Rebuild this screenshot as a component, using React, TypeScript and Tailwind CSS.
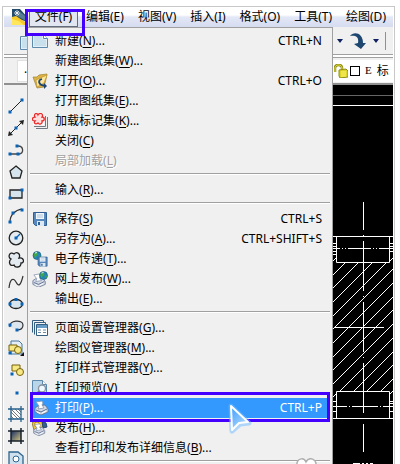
import { ReactNode } from "react";

type Entry = {
	label: string;
	accel: string;
	dots?: boolean;
	shortcut?: string;
	icon?: ReactNode;
	disabled?: boolean;
	active?: boolean;
};

const Svg = ({ children }: { children: ReactNode }) => (
	<svg viewBox="0 0 16 16" className="size-4 shrink-0" aria-hidden="true">
		{children}
	</svg>
);

const Dot = ({ x, y }: { x: number; y: number }) => (
	<rect x={x - 1.5} y={y - 1.5} width="3" height="3" fill="#0862b5" />
);

const Floppy = () => (
	<>
		<path d="M1.5 1.5h13v13h-11l-2-2z" fill="#5688bd" stroke="#315f94" />
		<path d="M4 2h8v6H4z" fill="#f2f7fb" />
		<path d="M5 4h6M5 6h6" stroke="#a9c3da" />
		<path d="M5 10h7v5H5z" fill="#dce8f2" />
		<path d="M6 11h2v3H6z" fill="#315f94" />
	</>
);

const Globe = ({ x, y }: { x: number; y: number }) => (
	<g transform={`translate(${x} ${y})`}>
		<circle r="4" fill="#2388b5" stroke="#17536d" strokeWidth=".6" />
		<path d="M-3-2 0-3.500 1-1-1 1-2 3-3 0zM2 0l2 1-2 2z" fill="#45a647" />
		<path d="M-2-2.500 0-3" stroke="#d5f4f8" />
	</g>
);

const Printer = () => (
	<>
		<path d="m2 8 3-2 7-1 3 4v3l-7 3-6-3z" fill="#d3d9e6" stroke="#60708e" strokeWidth=".8" strokeLinejoin="round" />
		<path d="m3 2 6-1 1 2-1 2 2 3-6 1 1-3z" fill="#fff" stroke="#8492ad" strokeWidth=".8" strokeLinejoin="round" />
		<path d="m3 10 5 2 6-3" stroke="#60708e" fill="none" />
		<path d="m4 12 3 1.500M9 13l4-2" stroke="#fff" />
	</>
);

const icons = {
	create: (
		<Svg>
			<path d="M.500 1.500h11l4 4v9H.500z" fill="#e3f0f7" stroke="#5d8aac" />
			<path d="M2 3h8v3l4 1v6H2z" fill="#c8e0ec" />
			<path d="M11.500 1.500v4h4" fill="#fff" stroke="#5d8aac" />
		</Svg>
	),
	open: (
		<Svg>
			<path d="m1 4 4 0 2-2 8-1-1 5-2 8-7 1z" fill="#dcb347" stroke="#a98a3c" strokeWidth=".8" />
			<path d="m4 7 11-5-3 8-7 4z" fill="#ffe9a0" stroke="#b78b20" strokeWidth=".6" />
			<path d="M10 6C6 7 6 11 11 12.500h2" fill="none" stroke="#1c4775" strokeWidth="1.800" />
			<path d="m12 10 3 3-3 3z" fill="#1c4775" />
		</Svg>
	),
	markup: (
		<Svg>
			<path d="M15.500 4v11.500H4M13.500 3v10.500H2" fill="none" stroke="#737982" />
			<path d="M1 1h11v11H1z" fill="#fff" />
			<path
				d="M3 4C1 1 5-1 6 2c2-3 6-1 4 2 3 0 3 4 0 4 1 3-3 4-4 2-2 2-5 0-3-2-4 0-3-4 0-4Z"
				fill="#ffdede"
				stroke="#ed2a2a"
				strokeWidth="1.300"
			/>
		</Svg>
	),
	save: (
		<Svg>
			<Floppy />
		</Svg>
	),
	transmit: (
		<Svg>
			<Globe x={5} y={4.5} />
			<g transform="translate(5 5) scale(.7)">
				<Floppy />
			</g>
		</Svg>
	),
	web: (
		<Svg>
			<g transform="translate(-1 2) scale(.95)">
				<Printer />
			</g>
			<Globe x={11.5} y={4.5} />
		</Svg>
	),
	pageSetup: (
		<Svg>
			<path d="M.500 12.500v-12h11v2M2.500 14.500v-12h11v2" fill="none" stroke="#345f83" />
			<path d="M4.500 4.500h11v11h-11z" fill="#fff" stroke="#345f83" />
			<path d="M5 5h10v3H5z" fill="#669cc5" />
			<path d="M6 10h3M6 12.500h3M11 10h3M11 12.500h3" stroke="#6b8aa4" />
		</Svg>
	),
	preview: (
		<Svg>
			<path d="M.500.500h10l4 4v11H.500z" fill="#b9d6e8" stroke="#5d8aac" />
			<path d="M10.500.500v4h4" fill="#fff" stroke="#5d8aac" />
			<circle cx="10" cy="8.500" r="3.500" fill="#eef8ff" stroke="#8a929e" strokeWidth="1.300" />
			<path d="m7.500 11-4 4" stroke="#727d8c" strokeWidth="2" />
		</Svg>
	),
	print: (
		<Svg>
			<Printer />
		</Svg>
	),
	publish: (
		<Svg>
			<path d="m0 3 4-3 6 1 2 4-4 5-6 0z" fill="#f0c63c" stroke="#806b27" strokeWidth=".8" />
			<circle cx="5" cy="4.500" r="2.500" fill="#fff2a2" stroke="#b18b1c" />
			<path d="m10 1 4 2 1 4-4 1z" fill="#375d91" stroke="#23466e" />
			<g transform="translate(0 3) scale(.85)">
				<Printer />
			</g>
		</Svg>
	),
};

const sections: Entry[][] = [
	[
		{ label: "新建", accel: "N", dots: true, shortcut: "CTRL+N", icon: icons.create },
		{ label: "新建图纸集", accel: "W", dots: true },
		{ label: "打开", accel: "O", dots: true, shortcut: "CTRL+O", icon: icons.open },
		{ label: "打开图纸集", accel: "E", dots: true },
		{ label: "加载标记集", accel: "K", dots: true, icon: icons.markup },
		{ label: "关闭", accel: "C" },
		{ label: "局部加载", accel: "L", disabled: true },
	],
	[{ label: "输入", accel: "R", dots: true }],
	[
		{ label: "保存", accel: "S", shortcut: "CTRL+S", icon: icons.save },
		{ label: "另存为", accel: "A", dots: true, shortcut: "CTRL+SHIFT+S" },
		{ label: "电子传递", accel: "T", dots: true, icon: icons.transmit },
		{ label: "网上发布", accel: "W", dots: true, icon: icons.web },
		{ label: "输出", accel: "E", dots: true },
	],
	[
		{ label: "页面设置管理器", accel: "G", dots: true, icon: icons.pageSetup },
		{ label: "绘图仪管理器", accel: "M", dots: true },
		{ label: "打印样式管理器", accel: "Y", dots: true },
		{ label: "打印预览", accel: "V", icon: icons.preview },
		{ label: "打印", accel: "P", dots: true, shortcut: "CTRL+P", icon: icons.print, active: true },
		{ label: "发布", accel: "H", dots: true, icon: icons.publish },
		{ label: "查看打印和发布详细信息", accel: "B", dots: true },
	],
];

const menus = ["编辑(E)", "视图(V)", "插入(I)", "格式(O)", "工具(T)", "绘图(D)"];

const drawTools: { name: string; art: ReactNode }[] = [
	{ name: "line", art: <><path d="M2 14 14 2" stroke="#222" /><Dot x={2} y={14} /><Dot x={14} y={2} /></> },
	{
		name: "xline",
		art: <><path d="M2 14 14 2" stroke="#222" /><path d="m0 16 1-5 4 4zM16 0l-5 1 4 4z" fill="#222" /><Dot x={8} y={8} /></>,
	},
	{
		name: "polyline",
		art: <><path d="M1 12h10c5 0 5-8-1-8" fill="none" stroke="#444" strokeWidth="1.3" /><Dot x={2} y={12} /><Dot x={10} y={12} /><Dot x={9} y={4} /></>,
	},
	{ name: "polygon", art: <path d="m8 2 6 5-2 7H4L2 7z" fill="#d6e4ed" stroke="#222" strokeWidth="1.3" /> },
	{
		name: "rectangle",
		art: <><path d="M2 4h12v8H2z" fill="#d6e4ed" stroke="#222" strokeWidth="1.3" /><Dot x={2} y={12} /><Dot x={14} y={4} /></>,
	},
	{
		name: "arc",
		art: <><path d="M2 14C2 7 7 2 14 1" fill="none" stroke="#333" strokeWidth="1.2" /><Dot x={2} y={14} /><Dot x={5} y={5} /><Dot x={14} y={2} /></>,
	},
	{
		name: "circle",
		art: <><circle cx="8" cy="8" r="6.800" fill="#e3ebf1" stroke="#222" strokeWidth="1.3" /><path d="m8 8 4-4" stroke="#0862b5" strokeWidth="1.3" /><Dot x={8} y={8} /></>,
	},
	{
		name: "revision cloud",
		art: (
			<path
				d="M3 7C-1 5 2-1 6 2c3-3 7 0 5 4 5-1 6 5 2 5 0 5-6 5-7 2-4 2-6-3-3-6Z"
				fill="#e3ebf1"
				stroke="#222"
				strokeWidth="1.3"
			/>
		),
	},
	{ name: "spline", art: <path d="M1 14C2 5 5 3 8 8c3 6 5 2 7-6" fill="none" stroke="#333" strokeWidth="1.2" /> },
	{
		name: "ellipse",
		art: <><ellipse cx="8" cy="8" rx="6.500" ry="4.500" fill="#d6e4ed" stroke="#222" strokeWidth="1.3" /><Dot x={2} y={8} /><Dot x={14} y={8} /><Dot x={8} y={3.5} /></>,
	},
	{
		name: "ellipse arc",
		art: <><path d="M2 9c-2-7 13-8 13-2 0 4-3 5-6 5" fill="#dce6ee" stroke="#333" strokeWidth="1.2" /><Dot x={2} y={7} /><Dot x={9} y={12} /></>,
	},
	{
		name: "insert block",
		art: (
			<>
				<path d="M3 1h8l3 3v10H3z" fill="#e4eef6" stroke="#46779d" />
				<path d="M1 5h8v6H1z" fill="#f8e884" stroke="#75610a" />
				<circle cx="10" cy="10" r="3.500" fill="#f8e884" stroke="#75610a" />
				<path d="M16 12v4h-4z" fill="#111" />
				<Dot x={2} y={13} />
			</>
		),
	},
	{
		name: "make block",
		art: (
			<>
				<path d="M4 3h8v6H4z" fill="#f8e884" stroke="#75610a" />
				<circle cx="12" cy="10" r="3.500" fill="#f8e884" stroke="#75610a" />
				<Dot x={4} y={12} />
			</>
		),
	},
	{ name: "point", art: <Dot x={9} y={9} /> },
	{
		name: "hatch",
		art: (
			<>
				<path d="M3 3h10v10H3z" fill="#fff" />
				<path d="m3 10 3 3M3 6l7 7M3 3l10 10M7 3l6 6M10 3l3 3" stroke="#555" strokeWidth=".8" />
				<path d="M0 3h16M0 13h16M3 0v16M13 0v16" stroke="#28608b" strokeWidth="1.3" />
			</>
		),
	},
	{
		name: "gradient",
		art: (
			<>
				<defs>
					<linearGradient id="fill" x2="1" y2="1">
						<stop stopColor="#142c63" />
						<stop offset="1" stopColor="#d7c87d" />
					</linearGradient>
				</defs>
				<path d="M3 3h10v10H3z" fill="url(#fill)" />
				<path d="M0 3h16M0 13h16M3 0v16M13 0v16" stroke="#18212a" strokeWidth="1.5" />
			</>
		),
	},
	{
		name: "region",
		art: (
			<>
				<path d="M1 2h9l5 4v10H1z" fill="#cfe1ef" stroke="#2e648d" strokeWidth="1.300" />
				<circle cx="8" cy="9" r="3" fill="#fff" stroke="#2e648d" />
			</>
		),
	},
];

const MenuItem = ({ entry }: { entry: Entry }) => {
	const button = (
		<button
			disabled={entry.disabled}
			className={
				entry.active
					? "flex h-5 w-full items-center gap-[6px] bg-[#3399ff] pr-[5px] text-white"
					: entry.disabled
						? "flex h-5 w-full items-center gap-[7px] pr-2 pl-[2px] text-[#a0a0a0] [text-shadow:1px_1px_0_#fff]"
						: "flex h-5 w-full items-center gap-[7px] pr-2 pl-[2px]"
			}
		>
			<span className="size-4 shrink-0">{entry.icon}</span>
			<span className="whitespace-nowrap">
				{entry.label}(<u className="underline-offset-2">{entry.accel}</u>){entry.dots && "..."}
			</span>
			{entry.shortcut && <span className="ml-auto">{entry.shortcut}</span>}
		</button>
	);

	if (!entry.active) {
		return button;
	}

	return (
		<div className="relative z-10 -mt-[6px] -mb-1 border-[3px] border-[#4400ff] bg-[#f0f0f0] pt-[3px] pb-px">
			{button}
		</div>
	);
};

const FileMenu = () => (
	<div className="absolute top-full left-[23px] z-10 w-[306px] border border-[#a0a0a0] bg-[#f0f0f0] px-[2px] pt-[3px] pb-2">
		{sections.map((section, i) => (
			<div key={i}>
				{i > 0 && (
					<div className="h-[9px] pt-[2px]">
						<hr className="h-[2px] border-t border-b border-t-[#a0a0a0] border-b-white" />
					</div>
				)}
				{section.map((entry) => (
					<MenuItem key={entry.label} entry={entry} />
				))}
			</div>
		))}
		<div className="pt-[2px]">
			<hr className="h-[2px] border-t border-b border-t-[#a0a0a0] border-b-white" />
		</div>
		<svg viewBox="0 0 28 34" className="absolute top-[374px] left-[198px] z-20 h-[34px] w-7" aria-hidden="true">
			<defs>
				<linearGradient id="pointer" x2=".7" y2="1">
					<stop stopColor="#3a9cff" />
					<stop offset="1" stopColor="#b4dcff" />
				</linearGradient>
			</defs>
			<path d="m5 4 18 17-9 1-8 7z" fill="none" stroke="#6db9ff" strokeWidth="5" strokeLinejoin="round" opacity=".5" />
			<path d="m5 4 17 16-9 1-7 7z" fill="url(#pointer)" stroke="#fff" strokeWidth="2" strokeLinejoin="round" />
		</svg>
		<svg viewBox="0 0 22 8" className="absolute right-[14px] bottom-1 h-2 w-[22px]" aria-hidden="true">
			<path d="M1 8C0 0 8-1 10 4c3-6 11-3 10 4" fill="#fff" stroke="#b0b0b0" strokeWidth="1.500" />
		</svg>
	</div>
);

const Drawing = () => (
	<svg viewBox="333 85 60 379" className="h-[379px] w-[60px] shrink-0" fill="none" stroke="#fff" aria-label="drawing">
		<path d="M333 95.500h60" stroke="#666" />
		<path d="M333 105.500h60" />
		<clipPath id="hatchArea">
			<path d="M333 263h60v128h-60z" />
		</clipPath>
		<g clipPath="url(#hatchArea)">
			{Array.from({ length: 14 }, (_, i) => (
				<path key={i} d={`M333 ${Math.round(274.5 + i * 13.7)}l60-60`} shapeRendering="crispEdges" />
			))}
		</g>
		<path d="M363.500 202v28M363.500 235v1M363.500 241v50M363.500 296v1M363.500 302v50M363.500 357v1M363.500 363v50M363.500 424v28" />
		<path d="M334 327.500h50" />
		<path d="M333 236.500h60M336.500 236v26.500h53V236M333 418.500h60M336.500 418v-26.500h53V418" />
		<path d="M333 248.500h7M342 248.500h1M345 248.500h1M348 248.500h23M373 248.500h1M376 248.500h1M379 248.500h14" />
		<path d="M333 406.500h14M349 406.500h1M352 406.500h26M380 406.500h1M383 406.500h10" />
		<path d="M333 243.500h3M333 246.500h3M333 251.500h3M333 254.500h3M390 243.500h3M390 246.500h3M390 251.500h3" />
		<path d="M333 401.500h3M333 411.500h3M390 401.500h3M390 403.500h3M390 411.500h3M333 261l3-3M390 261l3-3M333 397l3-3M390 394l3-3" />
		<path d="M353 463.500h7M362 463.500h2M366 463.500h2M370 463.500h3" />
	</svg>
);

const App = () => (
	<div className="h-screen overflow-hidden bg-white pt-[6px] pr-[5px] pl-[2px] font-['Noto_Sans','Noto_Sans_CJK_SC',sans-serif] text-xs text-black">
		<div className="flex h-full flex-col border border-b-0 border-[#c8c8c8] px-px">
			<nav className="relative flex h-5 shrink-0 items-center bg-linear-to-b from-white from-40% via-[#e3e8f6] via-50% to-[#d5dcf0] pl-2">
				<svg viewBox="0 0 16 16" className="size-4 shrink-0" aria-hidden="true">
					<path d="M0 0h8l8 9v4L0 8z" fill="#244b6b" />
					<path d="m8 3 8 6v4L5 7z" fill="#587e91" />
					<path d="m0 8 4-1 9 6v3H0z" fill="#f9c927" />
					<path d="m0 10 7 2 5 4H0z" fill="#ffe65d" />
					<path d="M5 1v6M2 4h6M3 2l4 4M7 2 3 6" stroke="#fff" strokeWidth=".8" />
				</svg>
				<button className="relative mr-2 ml-px h-[18px] w-[49px] self-end border border-[#646b7c] bg-[#e2e6f1] pb-[2px] leading-none whitespace-nowrap">
					文件(F)
					<span className="pointer-events-none absolute -top-px -left-[5px] z-30 h-[27px] w-[60px] border-[3px] border-[#4400ff]" />
				</button>
				<div className="flex gap-[14px] whitespace-nowrap">
					{menus.map((menu) => (
						<button key={menu}>{menu}</button>
					))}
				</div>
				<FileMenu />
			</nav>

			<div className="flex h-7 shrink-0 items-center border-b border-[#a0a0a0] bg-[#f0f0f0] pl-4">
				<button aria-label="new" className="pt-1">
					{icons.create}
				</button>
				<div className="mr-[7px] ml-auto flex items-center gap-[6px]">
					<svg viewBox="0 0 6 4" className="h-1 w-[6px]" aria-hidden="true">
						<path d="M0 0h6L3 4z" fill="#102060" />
					</svg>
					<button aria-label="redo">
						<svg viewBox="0 0 18 18" className="size-[18px]" aria-hidden="true">
							<path d="M1 4C5-1 14 1 14 11h3l-5 6-7-5 4-1C10 5 7 3 1 4Z" fill="#1d4670" />
						</svg>
					</button>
					<svg viewBox="0 0 6 4" className="h-1 w-[6px]" aria-hidden="true">
						<path d="M0 0h6L3 4z" fill="#102060" />
					</svg>
					<span className="h-[18px] w-px bg-[#909090]" />
				</div>
			</div>

			<div className="mt-[2px] flex h-7 shrink-0 items-center border-t border-b-2 border-t-[#a0a0a0] border-b-[#909090] bg-[#f0f0f0]">
				<div className="ml-[13px] h-[22px] w-20 border border-[#e0e0e0] bg-white pl-[6px]">.</div>
				<div className="ml-auto flex h-[22px] w-[60px] items-center bg-white pl-px">
					<svg viewBox="0 0 14 14" className="size-[14px]" aria-hidden="true">
						<path d="M1 8V4c0-4 7-4 7 0v2" fill="none" stroke="#8f8b12" strokeWidth="2.500" />
						<path d="M1 8V4c0-4 7-4 7 0v2" fill="none" stroke="#e3df42" />
						<path d="m5 6 7-1 2 2v6l-8 1-1-2z" fill="#dfd529" stroke="#8f8b12" />
						<path d="M7 8h5M7 10h5M7 12h5" stroke="#fff477" />
					</svg>
					<span className="ml-[2px] size-[10px] border border-black" />
					<span className="ml-[5px] font-['Liberation_Serif',serif] text-[11px]">E</span>
					<span className="ml-[5px]">标</span>
				</div>
			</div>

			<div className="flex min-h-0 flex-1">
				<div className="flex w-[23px] shrink-0 flex-col bg-[#f0f0f0] pt-[10px]">
					{drawTools.map((tool) => (
						<button key={tool.name} aria-label={tool.name} className="flex h-[22px] shrink-0 items-center justify-center">
							<Svg>{tool.art}</Svg>
						</button>
					))}
				</div>
				<div className="flex flex-1 justify-end overflow-hidden bg-black">
					<Drawing />
				</div>
			</div>
		</div>
	</div>
);

export default App;
